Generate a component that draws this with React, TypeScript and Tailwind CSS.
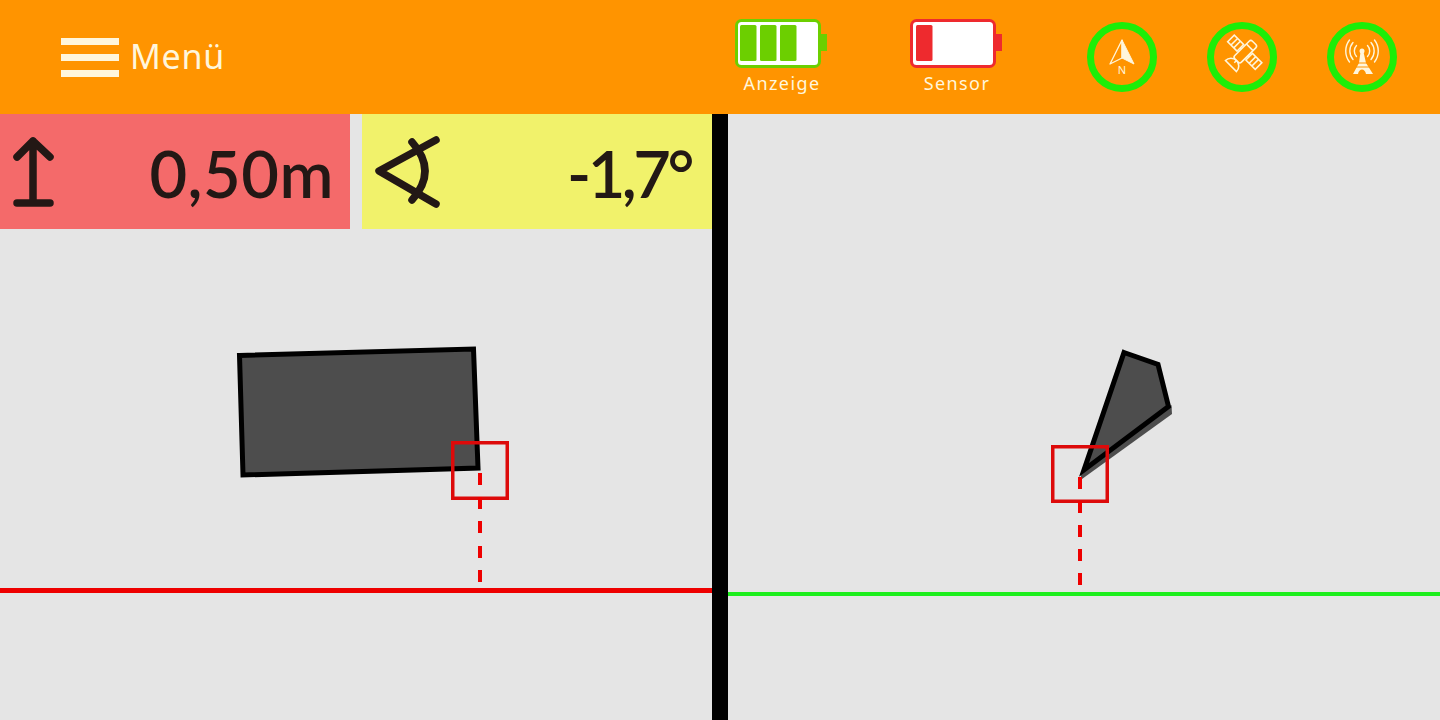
import React from "react";

const ink = "#231815";

const Battery: React.FC<{ color: string; cells: number[]; label: string; className: string }> = ({
  color,
  cells,
  label,
  className,
}) => {
  return (
    <div className={`flex flex-col items-center ${className}`}>
      <svg width="94" height="50" viewBox="0 0 94 50">
        <rect x="1.5" y="1.5" width="83" height="46" rx="5" fill="#fff" stroke={color} strokeWidth="3" />
        <rect x="85" y="15" width="7" height="17" fill={color} />
        {cells.map((x) => (
          <rect key={x} x={x} y="6" width="16.5" height="36" rx="1.5" fill={color} />
        ))}
      </svg>
      <span className="mt-[2px] text-[18px] leading-[24px] tracking-[1.4px] text-[#fff6dc]">{label}</span>
    </div>
  );
};

const Ring: React.FC<{ children: React.ReactNode }> = ({ children }) => {
  return (
    <svg width="70" height="70" viewBox="0 0 70 70">
      <circle cx="35" cy="35" r="31.5" fill="none" stroke="#1cee08" strokeWidth="7" />
      {children}
    </svg>
  );
};

const Stat: React.FC<{ bg: string; value: string; valueClass: string; icon: React.ReactNode }> = ({
  bg,
  value,
  valueClass,
  icon,
}) => {
  return (
    <div className={`flex h-[115px] w-[350px] items-center justify-between ${bg}`}>
      {icon}
      <span
        className={`mt-[3px] text-[65px] font-semibold leading-none text-[#231815] ${valueClass}`}
        style={{ fontFamily: "Lato, sans-serif" }}
      >
        {value}
      </span>
    </div>
  );
};

const Dashes: React.FC<{ x: number; ys: number[] }> = ({ x, ys }) => (
  <>
    {ys.map((y) => (
      <rect key={y} x={x - 2} y={y} width="4" height="12" fill="#ee0000" />
    ))}
  </>
);

export default function App() {
  return (
    <div
      className="flex h-[720px] w-[1440px] flex-col overflow-hidden bg-[#e5e5e5]"
      style={{ fontFamily: "'Noto Sans', sans-serif" }}
    >
      <header className="flex h-[114px] items-center bg-[#ff9400]">
        <div className="ml-[61px] flex w-[674px] items-center gap-[11px]">
          <div className="flex w-[58px] flex-col gap-[9px]">
            <div className="h-[7px] bg-[#fff6dc]" />
            <div className="h-[7px] bg-[#fff6dc]" />
            <div className="h-[7px] bg-[#fff6dc]" />
          </div>
          <span className="mb-[2px] text-[34px] leading-[40px] tracking-[0.7px] text-[#fff6dc]">Menü</span>
        </div>

        <Battery color="#6ccf00" cells={[5, 25, 45]} label="Anzeige" className="w-[94px]" />
        <Battery color="#ee2a2e" cells={[6]} label="Sensor" className="ml-[81px] w-[94px]" />

        <div className="ml-[83px] flex gap-[50px]">
          <Ring>
            <path d="M35 18 L23 42 L35 36 Z" fill="none" stroke="#fff6dc" strokeWidth="1.3" strokeLinejoin="round" />
            <path d="M35 18 L47 42 L35 36 Z" fill="#fff6dc" stroke="#fff6dc" strokeWidth="1" strokeLinejoin="round" />
            <text x="35" y="52" textAnchor="middle" fontSize="11" fill="#fff6dc">
              N
            </text>
          </Ring>
          <Ring>
            <g transform="translate(35 33) rotate(45) scale(0.78)" fill="none" stroke="#fff6dc" strokeWidth="2">
              <rect x="-6" y="-22" width="12" height="32" rx="3" />
              <path d="M-6 -14 H6" />
              <rect x="-25" y="-11" width="17" height="12" />
              <path d="M-19 -11 v12 M-14 -11 v12" />
              <rect x="8" y="-11" width="17" height="12" />
              <path d="M14 -11 v12 M19 -11 v12" />
              <path d="M-8 -5 h2 M6 -5 h2" />
              <path d="M-10 20 a10 10 0 0 1 20 0 Z" />
              <path d="M0 10 v4" />
            </g>
          </Ring>
          <Ring>
            <path d="M33.5 30 L32 41 L26 52 H31 C32 46 38 46 39 52 H46 L39 41 L36.5 30 Z" fill="#fff6dc" />
            <path d="M30 41 H41 M28 45 H43" stroke="#ff9400" strokeWidth="1" />
            <circle cx="35" cy="29" r="2.5" fill="#fff6dc" />
            <g transform="translate(0 4)" fill="none" stroke="#fff6dc" strokeWidth="1.4" strokeLinecap="round">
              <path d="M29.5 19.5 a8 8 0 0 0 0 11" />
              <path d="M40.5 19.5 a8 8 0 0 1 0 11" />
              <path d="M26 16.5 a13 13 0 0 0 0 17" />
              <path d="M44 16.5 a13 13 0 0 1 0 17" />
              <path d="M22.5 14 a18 18 0 0 0 0 22" />
              <path d="M47.5 14 a18 18 0 0 1 0 22" />
            </g>
          </Ring>
        </div>
      </header>

      <main className="flex flex-1">
        <section className="flex w-[712px] flex-col">
          <div className="flex justify-between">
            <Stat
              bg="bg-[#f46a6a]"
              value="0,50m"
              valueClass="pr-[16px] tracking-[0.5px]"
              icon={
                <svg width="66" height="115" viewBox="0 0 66 115" fill="none" stroke={ink} strokeWidth="7.5" strokeLinecap="round" strokeLinejoin="round">
                  <path d="M33 27 V89 M17 43 L33 27 L50 43 M17 89 H50" />
                </svg>
              }
            />
            <Stat
              bg="bg-[#f1f26b]"
              value="-1,7°"
              valueClass="pr-[21px] tracking-[-3.5px]"
              icon={
                <svg width="90" height="115" viewBox="362 114 90 115" fill="none" stroke={ink} strokeWidth="7.5" strokeLinecap="round" strokeLinejoin="round">
                  <path d="M436 140 L379 171 L436 204" />
                  <path d="M412 142 Q438 171 412 200" />
                </svg>
              }
            />
          </div>
          <svg className="block" width="712" height="491" viewBox="0 229 712 491">
            <polygon points="239.5,355.5 473.5,349 478,468 243,475" fill="#4d4d4d" stroke="#000" strokeWidth="5" />
            <rect x="452.75" y="442.75" width="54.5" height="55.5" fill="none" stroke="#dd0a0a" strokeWidth="3.5" />
            <Dashes x={480} ys={[473, 497, 521, 546, 570]} />
            <rect x="0" y="588" width="712" height="5" fill="#ee0000" />
          </svg>
        </section>

        <div className="w-[16px] bg-black" />

        <section className="w-[712px]">
          <svg className="block" width="712" height="606" viewBox="728 114 712 606">
            <polygon points="1171.5,405 1172,414 1082,479 1080,474" fill="#4d4d4d" />
            <polygon points="1124,352.5 1158,364.5 1168.5,406.5 1084,470" fill="#4d4d4d" stroke="#000" strokeWidth="5" />
            <rect x="1052.75" y="446.75" width="54.5" height="54.5" fill="none" stroke="#dd0a0a" strokeWidth="3.5" />
            <Dashes x={1080} ys={[477, 501, 525, 549, 573]} />
            <rect x="728" y="592" width="712" height="4" fill="#1cee1c" />
          </svg>
        </section>
      </main>
    </div>
  );
}
